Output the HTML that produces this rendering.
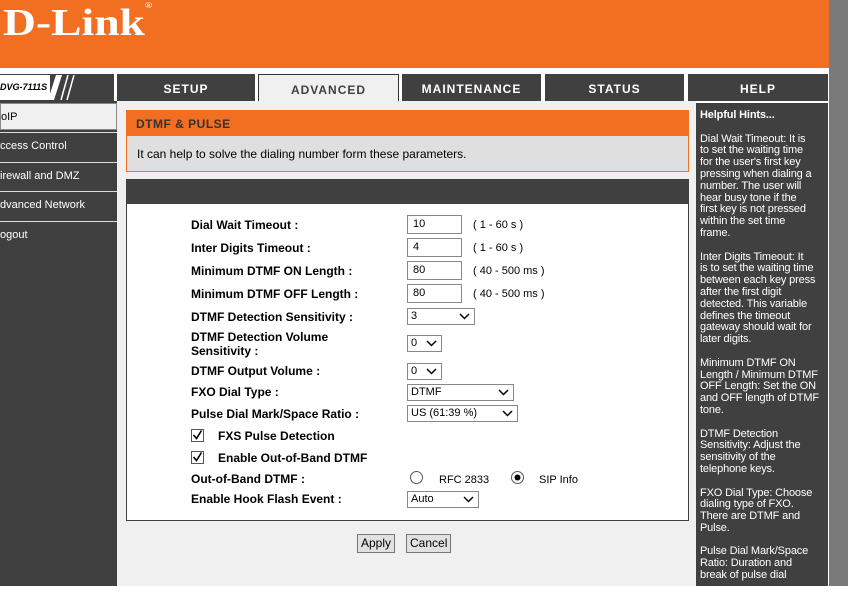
<!DOCTYPE html>
<html><head><meta charset="utf-8"><style>
*{margin:0;padding:0;box-sizing:border-box}
body{width:848px;height:614px;background:#fff;font-family:"Liberation Sans",sans-serif;position:relative;overflow:hidden}
.a{position:absolute}
.hdr{left:0;top:0;width:829px;height:68px;background:#f26f21}
.logo{left:3px;top:1px;font-family:"Liberation Serif",serif;font-weight:bold;font-size:38px;color:#fff;letter-spacing:0px;transform:scaleX(1.2);transform-origin:left}
.gr{left:829px;top:0;width:19px;height:586px;background:#7a7a7a}
.tab{top:74px;height:27px;background:#404040;color:#fff;font-weight:bold;font-size:12px;letter-spacing:1px;text-align:center;line-height:30px}
.side{left:0;top:101px;width:117px;height:485px;background:#404040}
.si{left:0;width:117px;height:27px;background:#404040;color:#fff;font-size:11px;line-height:27px;border-top:1px solid #ddd}
.cont{left:117px;top:101px;width:579px;height:485px;background:#f0f0f0}
.help{left:696px;top:103px;width:132px;height:483px;background:#404040;color:#fff;font-size:11px;line-height:11.8px;padding:7px 4px;letter-spacing:-0.15px}
.lb{left:191px;font-weight:bold;font-size:12px;color:#000}
.in{left:407px;height:19px;border:1px solid #888;background:#fff;font-size:11px;padding-left:5px;line-height:17px}
.rg{left:473px;font-size:11px}
.sel{left:407px;height:17px;border:1px solid #888;background:#fff;font-size:11px;padding-left:3px;line-height:15px}
.sel svg{position:absolute;right:4px;top:4px}
.btn{top:534px;height:19px;border:1px solid #777;background:#e1e1e1;font-size:12px;line-height:17px;padding:0 3px}
</style></head><body>
<div class="a hdr"></div>
<div class="a logo">D-Link<span style="font-size:8px;vertical-align:top">®</span></div>
<div class="a gr"></div>
<div class="a" style="left:0;top:74px;width:114px;height:27px;background:#404040"></div>
<div class="a" style="left:0;top:75px;width:50px;height:25px;background:#fff;font-size:9px;font-weight:bold;font-style:italic;line-height:25px">DVG-7111S</div>
<svg class="a" style="left:48px;top:75px" width="30" height="25"><polygon points="8,0 14,0 6,25 0,25" fill="#fff"/><line x1="20" y1="0" x2="13" y2="25" stroke="#fff" stroke-width="1.5"/><line x1="26" y1="0" x2="19" y2="25" stroke="#fff" stroke-width="1.5"/></svg>
<div class="a tab" style="left:117px;width:138px">SETUP</div>
<div class="a tab" style="left:258px;width:141px;background:#f0f0f0;color:#404040;border:1px solid #333;border-bottom:none;height:28px">ADVANCED</div>
<div class="a tab" style="left:402px;width:139px">MAINTENANCE</div>
<div class="a tab" style="left:545px;width:139px">STATUS</div>
<div class="a tab" style="left:688px;width:140px">HELP</div>
<div class="a side"></div>
<div class="a si" style="top:103px;background:#f0f0f0;color:#000;border:1px solid #888">oIP</div>
<div class="a si" style="top:132px">ccess Control</div>
<div class="a si" style="top:162px">irewall and DMZ</div>
<div class="a si" style="top:191px">dvanced Network</div>
<div class="a si" style="top:221px">ogout</div>
<div class="a cont"></div>
<div class="a" style="left:126px;top:110px;width:563px;height:26px;background:#f26f21;color:#333;font-weight:bold;font-size:12px;line-height:28px;padding-left:10px;letter-spacing:0.5px">DTMF &amp; PULSE</div>
<div class="a" style="left:126px;top:136px;width:563px;height:36px;background:#dfdfdf;border:1px solid #f26f21;border-top:none;font-size:12px;line-height:36px;padding-left:10px">It can help to solve the dialing number form these parameters.</div>
<div class="a" style="left:126px;top:179px;width:563px;height:342px;background:#fff;border:1px solid #404040;border-top:25px solid #404040"></div>
<div class="a lb" style="top:218px">Dial Wait Timeout :</div>
<div class="a lb" style="top:241px">Inter Digits Timeout :</div>
<div class="a lb" style="top:264px">Minimum DTMF ON Length :</div>
<div class="a lb" style="top:287px">Minimum DTMF OFF Length :</div>
<div class="a lb" style="top:310px">DTMF Detection Sensitivity :</div>
<div class="a lb" style="top:330px;line-height:14px">DTMF Detection Volume<br>Sensitivity :</div>
<div class="a lb" style="top:364px">DTMF Output Volume :</div>
<div class="a lb" style="top:385px">FXO Dial Type :</div>
<div class="a lb" style="top:407px">Pulse Dial Mark/Space Ratio :</div>
<div class="a lb" style="left:218px;top:429px">FXS Pulse Detection</div>
<div class="a lb" style="left:218px;top:451px">Enable Out-of-Band DTMF</div>
<div class="a lb" style="top:472px">Out-of-Band DTMF :</div>
<div class="a lb" style="top:492px">Enable Hook Flash Event :</div>
<svg class="a" style="left:191px;top:429px" width="13" height="36"><g fill="none" stroke="#555"><rect x="0.5" y="0.5" width="12" height="12"/><rect x="0.5" y="22.5" width="12" height="12"/></g><g fill="none" stroke="#000" stroke-width="1.6"><path d="M2.5 6l3 3.5 5-8"/><path d="M2.5 28l3 3.5 5-8"/></g></svg>
<div class="a in" style="top:215px;width:55px">10</div><div class="a rg" style="top:219px">( 1 - 60 s )</div>
<div class="a in" style="top:238px;width:55px">4</div><div class="a rg" style="top:242px">( 1 - 60 s )</div>
<div class="a in" style="top:261px;width:55px">80</div><div class="a rg" style="top:265px">( 40 - 500 ms )</div>
<div class="a in" style="top:284px;width:55px">80</div><div class="a rg" style="top:288px">( 40 - 500 ms )</div>
<div class="a sel" style="top:308px;width:68px">3<svg width="11" height="7"><path d="M1 1l4.5 4.5L10 1" fill="none" stroke="#000" stroke-width="1.5"/></svg></div>
<div class="a sel" style="top:335px;width:35px">0<svg width="11" height="7"><path d="M1 1l4.5 4.5L10 1" fill="none" stroke="#000" stroke-width="1.5"/></svg></div>
<div class="a sel" style="top:363px;width:35px">0<svg width="11" height="7"><path d="M1 1l4.5 4.5L10 1" fill="none" stroke="#000" stroke-width="1.5"/></svg></div>
<div class="a sel" style="top:384px;width:107px">DTMF<svg width="11" height="7"><path d="M1 1l4.5 4.5L10 1" fill="none" stroke="#000" stroke-width="1.5"/></svg></div>
<div class="a sel" style="top:405px;width:111px">US (61:39 %)<svg width="11" height="7"><path d="M1 1l4.5 4.5L10 1" fill="none" stroke="#000" stroke-width="1.5"/></svg></div>
<svg class="a" style="left:410px;top:471px" width="120" height="14"><circle cx="6.5" cy="6.5" r="6" fill="#fff" stroke="#555"/><circle cx="107.5" cy="6.5" r="6" fill="#fff" stroke="#555"/><circle cx="107.5" cy="6.5" r="3" fill="#000"/></svg>
<div class="a" style="left:439px;top:474px;font-size:11px">RFC 2833</div>
<div class="a" style="left:539px;top:474px;font-size:11px">SIP Info</div>
<div class="a sel" style="top:491px;width:72px">Auto<svg width="11" height="7"><path d="M1 1l4.5 4.5L10 1" fill="none" stroke="#000" stroke-width="1.5"/></svg></div>
<div class="a btn" style="left:357px">Apply</div>
<div class="a btn" style="left:406px">Cancel</div>
<div class="a help"><b>Helpful Hints...</b><br><br>Dial Wait Timeout: It is<br>to set the waiting time<br>for the user's first key<br>pressing when dialing a<br>number. The user will<br>hear busy tone if the<br>first key is not pressed<br>within the set time<br>frame.<br><br>Inter Digits Timeout: It<br>is to set the waiting time<br>between each key press<br>after the first digit<br>detected. This variable<br>defines the timeout<br>gateway should wait for<br>later digits.<br><br>Minimum DTMF ON<br>Length / Minimum DTMF<br>OFF Length: Set the ON<br>and OFF length of DTMF<br>tone.<br><br>DTMF Detection<br>Sensitivity: Adjust the<br>sensitivity of the<br>telephone keys.<br><br>FXO Dial Type: Choose<br>dialing type of FXO.<br>There are DTMF and<br>Pulse.<br><br>Pulse Dial Mark/Space<br>Ratio: Duration and<br>break of pulse dial</div>
</body></html>
